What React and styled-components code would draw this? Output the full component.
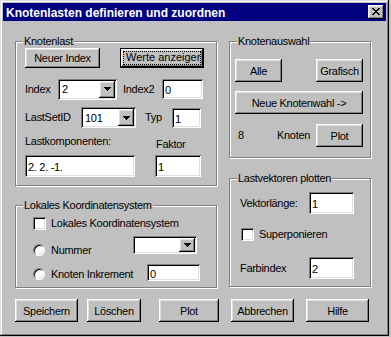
import React from 'react'
import styled, { createGlobalStyle, css } from 'styled-components'

const GlobalStyle = createGlobalStyle`
  html, body {
    margin: 0;
    padding: 0;
    background: #c0c0c0;
  }
  body {
    font-family: "Liberation Sans", Arial, sans-serif;
    font-size: 11px;
    letter-spacing: -0.3px;
    color: #000;
  }
  * { box-sizing: border-box; }
`

const raised = css`
  box-shadow: inset -1px -1px #000, inset 1px 1px #fff, inset -2px -2px #808080, inset 2px 2px #dfdfdf;
`
const sunken = css`
  box-shadow: inset 1px 1px #808080, inset -1px -1px #fff, inset 2px 2px #000, inset -2px -2px #dfdfdf;
`

const Window = styled.div`
  width: 389px;
  height: 336px;
  padding: 3px;
  background: #c0c0c0;
  box-shadow: inset -1px -1px #000, inset 1px 1px #dfdfdf, inset -2px -2px #808080, inset 2px 2px #fff;
  display: flex;
  flex-direction: column;
`

const TitleBar = styled.div`
  height: 18px;
  background: #000080;
  color: #fff;
  display: flex;
  align-items: center;
  justify-content: space-between;
  padding: 0 2px 0 3px;
`

const TitleText = styled.span`
  font-weight: bold;
  font-size: 12px;
  letter-spacing: 0;
  padding-top: 1px;
`

const CloseButton = styled.div`
  width: 16px;
  height: 14px;
  background: #c0c0c0;
  ${raised};
  display: flex;
  align-items: center;
  justify-content: center;
  padding: 0 1px 1px 0;
`

const Main = styled.div`
  display: grid;
  grid-template-columns: 202px 142px;
  column-gap: 12px;
  padding: 20px 0 0 12px;
`

const Column = styled.div`
  display: flex;
  flex-direction: column;
  gap: ${p => p.$gap}px;
`

const GroupBox = styled.div`
  position: relative;
  height: ${p => p.$h}px;
  border: 1px solid #808080;
  box-shadow: 1px 1px 0 #fff, inset 1px 1px 0 #fff;
  padding: ${p => p.$pad};
  display: flex;
  flex-direction: column;
`

const Legend = styled.span`
  position: absolute;
  top: -7px;
  left: 7px;
  padding: 0 1px;
  background: #c0c0c0;
  line-height: 13px;
  white-space: nowrap;
`

const Row = styled.div`
  display: flex;
  align-items: ${p => p.$align || 'center'};
  justify-content: ${p => p.$justify || 'flex-start'};
  margin-top: ${p => p.$mt || 0}px;
  height: ${p => (p.$h ? `${p.$h}px` : 'auto')};
  width: ${p => (p.$w ? `${p.$w}px` : 'auto')};
`

const Stack = styled.div`
  display: flex;
  flex-direction: column;
  width: ${p => p.$w}px;
  margin-left: ${p => p.$ml || 0}px;
`

const Label = styled.span`
  display: inline-block;
  width: ${p => (p.$w ? `${p.$w}px` : 'auto')};
  margin-left: ${p => p.$ml || 0}px;
  margin-top: ${p => p.$mt || 0}px;
  line-height: 13px;
  white-space: nowrap;
`

const Button = styled.div`
  width: ${p => p.$w}px;
  height: ${p => p.$h || 23}px;
  margin-left: ${p => (p.$push ? 'auto' : `${p.$ml || 0}px`)};
  margin-top: ${p => p.$mt || 0}px;
  background: #c0c0c0;
  ${raised};
  display: flex;
  align-items: center;
  justify-content: center;
  white-space: nowrap;
`

const DefaultButton = styled.div`
  width: ${p => p.$w}px;
  height: ${p => p.$h}px;
  margin-left: ${p => p.$ml || 0}px;
  border: 1px solid #000;
  background: #c0c0c0;
  ${raised};
  display: flex;
  padding: 2px;
`

const FocusRect = styled.span`
  flex: 1;
  border: 1px dotted #000;
  overflow: hidden;
  white-space: nowrap;
  padding-left: 2px;
  line-height: 11px;
  letter-spacing: 0;
`

const Field = styled.div`
  width: ${p => p.$w}px;
  height: ${p => p.$h}px;
  margin-top: ${p => p.$mt || 0}px;
  margin-left: ${p => p.$ml || 0}px;
  background: #fff;
  ${sunken};
  display: flex;
  align-items: center;
  padding: 2px 3px 0;
  white-space: nowrap;
`

const Combo = styled.div`
  width: ${p => p.$w}px;
  height: ${p => p.$h}px;
  margin-left: ${p => p.$ml || 0}px;
  background: #fff;
  ${sunken};
  display: flex;
  align-items: center;
  justify-content: space-between;
  padding: 2px 2px 2px 4px;
`

const DropButton = styled.div`
  width: 16px;
  height: 100%;
  background: #c0c0c0;
  ${raised};
  display: flex;
  align-items: center;
  justify-content: center;
`

const CheckBox = styled.span`
  width: 13px;
  height: 13px;
  margin-left: ${p => p.$ml || 0}px;
  background: #fff;
  ${sunken};
  flex: none;
`

const OptionLabel = styled.div`
  display: flex;
  align-items: center;
  width: ${p => p.$w}px;
  margin-top: ${p => p.$mt || 0}px;
`

const RadioDot = styled.span`
  width: 12px;
  height: 12px;
  flex: none;
  border-radius: 50%;
  background: #fff;
  border: 1px solid;
  border-color: #808080 #fff #fff #808080;
  box-shadow: inset 1px 1px #000, inset -1px -1px #dfdfdf;
  margin-right: 6px;
`

const ButtonBar = styled.div`
  display: flex;
  margin-top: 11px;
  padding-left: 12px;
`

function Arrow() {
  return (
    <svg width="7" height="4" viewBox="0 0 7 4" shapeRendering="crispEdges">
      <rect x="0" y="0" width="7" height="1" fill="#000" />
      <rect x="1" y="1" width="5" height="1" fill="#000" />
      <rect x="2" y="2" width="3" height="1" fill="#000" />
      <rect x="3" y="3" width="1" height="1" fill="#000" />
    </svg>
  )
}

function CloseGlyph() {
  const rows = [[0, 1, 6, 7], [1, 2, 5, 6], [2, 3, 4, 5], [3, 4], [2, 3, 4, 5], [1, 2, 5, 6], [0, 1, 6, 7]]
  return (
    <svg width="8" height="7" viewBox="0 0 8 7" shapeRendering="crispEdges">
      {rows.map((cols, y) =>
        cols.map(x => <rect key={`${x}-${y}`} x={x} y={y} width="1" height="1" fill="#000" />)
      )}
    </svg>
  )
}

function Dropdown({ w, h, value, ml }) {
  return (
    <Combo $w={w} $h={h} $ml={ml}>
      <span>{value}</span>
      <DropButton><Arrow /></DropButton>
    </Combo>
  )
}

export default function App() {
  return (
    <>
      <GlobalStyle />
      <Window>
        <TitleBar>
          <TitleText>Knotenlasten definieren und zuordnen</TitleText>
          <CloseButton><CloseGlyph /></CloseButton>
        </TitleBar>

        <Main>
          <Column $gap={19}>
            <GroupBox $h={145} $pad="6px 0 0 9px">
              <Legend>Knotenlast</Legend>
              <Row $h={20}>
                <Button $w={75} $h={20}>Neuer Index</Button>
                <DefaultButton $w={84} $h={20} $ml={20}>
                  <FocusRect>Werte anzeigen</FocusRect>
                </DefaultButton>
              </Row>
              <Row $mt={10} $h={22}>
                <Label $w={33}>Index</Label>
                <Dropdown w={59} h={21} value="2" />
                <Label $w={39} $ml={6}>Index2</Label>
                <Field $w={41} $h={20}>0</Field>
              </Row>
              <Row $mt={7} $h={21}>
                <Label $w={56}>LastSetID</Label>
                <Dropdown w={55} h={21} value="101" />
                <Label $w={27} $ml={9}>Typ</Label>
                <Field $w={29} $h={20}>1</Field>
              </Row>
              <Row $mt={7} $align="flex-start">
                <Stack $w={110}>
                  <Label>Lastkomponenten:</Label>
                  <Field $w={110} $h={22} $mt={7}>2. 2. -1.</Field>
                </Stack>
                <Stack $w={46} $ml={20}>
                  <Label $mt={3} $ml={1}>Faktor</Label>
                  <Field $w={46} $h={22} $mt={4}>1</Field>
                </Stack>
              </Row>
            </GroupBox>

            <GroupBox $h={83} $pad="10px 0 0 17px">
              <Legend>Lokales Koordinatensystem</Legend>
              <Row $h={15}>
                <CheckBox />
                <Label $ml={5}>Lokales Koordinatensystem</Label>
              </Row>
              <Row $mt={5} $align="flex-start">
                <OptionLabel $w={100} $mt={8}>
                  <RadioDot />
                  <span>Nummer</span>
                </OptionLabel>
                <Dropdown w={64} h={18} value="" />
              </Row>
              <Row $mt={8} $align="flex-start">
                <OptionLabel $w={114} $mt={4}>
                  <RadioDot />
                  <span>Knoten Inkrement</span>
                </OptionLabel>
                <Field $w={53} $h={17}>0</Field>
              </Row>
            </GroupBox>
          </Column>

          <Column $gap={20}>
            <GroupBox $h={117} $pad="17px 0 0 5px">
              <Legend>Knotenauswahl</Legend>
              <Row $w={128} $justify="space-between">
                <Button $w={47}>Alle</Button>
                <Button $w={47}>Grafisch</Button>
              </Row>
              <Button $w={128} $mt={9}>Neue Knotenwahl -&gt;</Button>
              <Row $w={128} $mt={10}>
                <Label $w={39} $ml={3}>8</Label>
                <Label>Knoten</Label>
                <Button $w={47} $push>Plot</Button>
              </Row>
            </GroupBox>

            <GroupBox $h={109} $pad="13px 0 0 10px">
              <Legend>Lastvektoren plotten</Legend>
              <Row $h={22}>
                <Label $w={69}>Vektorlänge:</Label>
                <Field $w={45} $h={22}>1</Field>
              </Row>
              <Row $mt={13} $h={15}>
                <CheckBox $ml={1} />
                <Label $ml={5}>Superponieren</Label>
              </Row>
              <Row $mt={15} $h={22}>
                <Label $w={69}>Farbindex</Label>
                <Field $w={45} $h={22}>2</Field>
              </Row>
            </GroupBox>
          </Column>
        </Main>

        <ButtonBar>
          <Button $w={63}>Speichern</Button>
          <Button $w={54} $ml={9}>Löschen</Button>
          <Button $w={60} $ml={18}>Plot</Button>
          <Button $w={63} $ml={12}>Abbrechen</Button>
          <Button $w={63} $ml={12}>Hilfe</Button>
        </ButtonBar>
      </Window>
    </>
  )
}
